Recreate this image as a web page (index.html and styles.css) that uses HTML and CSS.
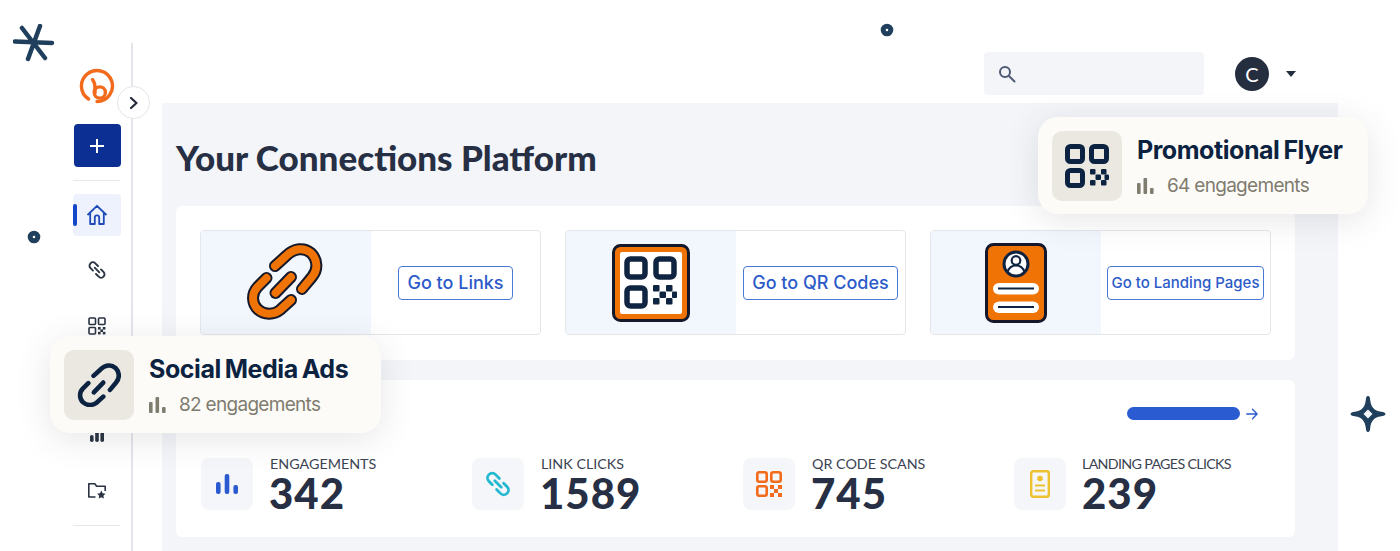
FILE: index.html
```html
<!DOCTYPE html>
<html lang="en">
<head>
<meta charset="utf-8">
<title>Your Connections Platform</title>
<link rel="stylesheet" href="styles.css">
</head>
<body>
<div class="stage">
  <div class="app">
    <aside class="sidebar">
      <div class="logo">
        <svg width="36" height="36" viewBox="0 0 36 36" fill="none" stroke="#f26a1b" stroke-width="3.4" stroke-linecap="round"><path d="M9.5 31A15.500 15.500 0 1 1 18 33.500"/><path d="M13.500 11.500C15.500 14 16 17 16 20v5"/><circle cx="20.800" cy="24.500" r="5.600"/></svg>
      </div>
      <button class="create">
        <svg width="16" height="16" viewBox="0 0 16 16" stroke="#fff" stroke-width="2"><path d="M8 1v14M1 8h14"/></svg>
      </button>
      <hr class="rule">
      <nav class="nav">
        <a class="nav-item active">
          <svg width="22" height="22" viewBox="0 0 22 22" fill="none" stroke="#1f4bb8" stroke-width="1.8" stroke-linejoin="round"><path d="M1.500 11 11 1.800 20.500 11M4.200 9v11h4.600v-6.500a2.200 2.200 0 0 1 4.400 0V20h4.600V9"/></svg>
        </a>
        <a class="nav-item">
          <svg width="20" height="20" viewBox="0 0 20 20" fill="none" stroke="#2a3342" stroke-width="1.900" stroke-linecap="round"><path d="M11 6 8.300 3.300a3.400 3.400 0 0 0-4.800 0 3.400 3.400 0 0 0 0 4.800L6 10.600"/><path d="M9 14l2.700 2.700a3.400 3.400 0 0 0 4.800 0 3.400 3.400 0 0 0 0-4.800L14 9.400"/><path d="m7.700 7.700 4.600 4.600"/></svg>
        </a>
        <a class="nav-item">
          <svg width="18" height="18" viewBox="0 0 18 18"><g fill="none" stroke="#2a3342" stroke-width="1.600"><rect x="1" y="1" width="6.500" height="6.500" rx="1"/><rect x="10.500" y="1" width="6.500" height="6.500" rx="1"/><rect x="1" y="10.500" width="6.500" height="6.500" rx="1"/></g><g fill="#2a3342"><rect x="10" y="10" width="2.600" height="2.600"/><rect x="14.800" y="10" width="2.600" height="2.600"/><rect x="12.400" y="12.400" width="2.600" height="2.600"/><rect x="10" y="14.800" width="2.600" height="2.600"/><rect x="14.800" y="14.800" width="2.600" height="2.600"/></g></svg>
        </a>
        <a class="nav-item">
          <svg width="18" height="18" viewBox="0 0 18 18" fill="#2a3342"><rect x="1" y="1" width="16" height="16" rx="2"/></svg>
        </a>
        <a class="nav-item">
          <svg width="16" height="12" viewBox="0 0 16 12" fill="#2a3342"><rect x="1" y="5" width="3.600" height="7" rx="1.800"/><rect x="6.200" y="1.500" width="3.600" height="10.500" rx="1.800"/><rect x="11.400" y="0" width="3.600" height="12" rx="1.800"/></svg>
        </a>
        <a class="nav-item">
          <svg width="20" height="18" viewBox="0 0 20 18" fill="none" stroke="#2a3342" stroke-width="1.600" stroke-linejoin="round"><path d="M8.500 15H1.800V1.800h6l1.800 2.400h8.600V9"/><path fill="#2a3342" stroke="none" d="m14.300 8.600 1.300 2.700 2.900.4-2.100 2 .5 2.900-2.600-1.400-2.600 1.400.5-2.900-2.100-2 2.900-.4z"/></svg>
        </a>
      </nav>
      <hr class="rule">
    </aside>
    <main class="main">
      <header class="topbar">
        <div class="search">
          <svg width="18" height="18" viewBox="0 0 18 18" fill="none" stroke="#4f5a75" stroke-width="2" stroke-linecap="round"><circle cx="7" cy="7" r="5"/><path d="m11 11 5.500 5.500"/></svg>
        </div>
        <div class="avatar">C</div>
        <span class="caret"></span>
      </header>
      <section class="panel">
        <h1 class="title">Your Connections Platform</h1>
        <div class="box shortcuts">
          <div class="shortcut">
            <div class="art">
              <svg width="84" height="84" viewBox="2 -1 84 84" fill="none" stroke-linecap="round" stroke-linejoin="round">
                <g stroke="#14182a" stroke-width="12"><path d="M24.500 36 15.500 45C9 52 10 62 16 67.500 22 73 32 73 38 68L49 58"/><path d="M33 24 44 14C52 6 62 5 69 11 76 18 76 28 70 35L60 47"/><path d="M33.500 51 49 35"/></g>
                <g stroke="#f07305" stroke-width="8"><path d="M24.500 36 15.500 45C9 52 10 62 16 67.500 22 73 32 73 38 68L49 58"/><path d="M33 24 44 14C52 6 62 5 69 11 76 18 76 28 70 35L60 47"/><path d="M33.500 51 49 35"/></g>
              </svg>
            </div>
            <div class="action"><a class="go">Go to Links</a></div>
          </div>
          <div class="shortcut">
            <div class="art">
              <svg width="78" height="78" viewBox="0 0 78 78">
                <rect x="1.500" y="1.500" width="75" height="75" rx="7" fill="#f07305" stroke="#14182a" stroke-width="3"/>
                <rect x="8" y="8" width="62" height="62" rx="2" fill="#fff"/>
                <g fill="none" stroke="#0f2440" stroke-width="5.500"><rect x="15" y="15" width="18" height="18" rx="3.500"/><rect x="44" y="15" width="18" height="18" rx="3.500"/><rect x="15" y="44" width="18" height="18" rx="3.500"/></g>
                <g fill="#0f2440"><rect x="41" y="41" width="6.500" height="6.500" rx="1"/><rect x="54" y="41" width="6.500" height="6.500" rx="1"/><rect x="47.500" y="47.500" width="6.500" height="6.500" rx="1"/><rect x="60" y="47.500" width="5" height="6.500" rx="1"/><rect x="41" y="54" width="6.500" height="6.500" rx="1"/><rect x="54" y="54" width="6.500" height="6.500" rx="1"/></g>
              </svg>
            </div>
            <div class="action"><a class="go">Go to QR Codes</a></div>
          </div>
          <div class="shortcut">
            <div class="art">
              <svg width="62" height="80" viewBox="0 0 62 80">
                <rect x="1.500" y="1.500" width="59" height="77" rx="7" fill="#f07305" stroke="#14182a" stroke-width="3"/>
                <circle cx="31" cy="21" r="12" fill="#fff" stroke="#0f2440" stroke-width="3"/>
                <circle cx="31" cy="17.500" r="4.300" fill="none" stroke="#0f2440" stroke-width="2.200"/>
                <path d="M22.500 29c1.500-4.500 4.500-6.500 8.500-6.500s7 2 8.500 6.500" fill="none" stroke="#0f2440" stroke-width="2.200"/>
                <rect x="8" y="40" width="46" height="11.500" rx="5.750" fill="#fff"/>
                <rect x="8" y="58.500" width="46" height="11.500" rx="5.750" fill="#fff"/>
                <path d="M13 45.500h36M13 64h36" stroke="#0f2440" stroke-width="2"/>
              </svg>
            </div>
            <div class="action"><a class="go small">Go to Landing Pages</a></div>
          </div>
        </div>
        <div class="box metrics">
          <div class="metrics-head"><span class="redacted"></span>
            <svg width="12" height="12" viewBox="0 0 12 12" fill="none" stroke="#2a5bd0" stroke-width="1.300" stroke-linecap="round" stroke-linejoin="round"><path d="M.7 6h10.400M6.500 1.200 11.100 6l-4.600 4.800"/></svg>
          </div>
          <div class="stats">
            <div class="stat">
              <div class="stat-icon"><svg width="22" height="20" viewBox="0 0 22 20" fill="#2a5bd0"><rect x="0" y="8" width="4.600" height="12" rx="2"/><rect x="8.700" y="0" width="4.600" height="20" rx="2"/><rect x="17.400" y="11" width="4.600" height="9" rx="2"/></svg></div>
              <div><div class="stat-label">ENGAGEMENTS</div><div class="stat-value">342</div></div>
            </div>
            <div class="stat">
              <div class="stat-icon"><svg width="28" height="28" viewBox="0 0 20 20" fill="none" stroke="#22b8cf" stroke-width="2" stroke-linecap="round"><path d="M11 6 8.300 3.300a3.400 3.400 0 0 0-4.800 0 3.400 3.400 0 0 0 0 4.800L6 10.600"/><path d="M9 14l2.700 2.700a3.400 3.400 0 0 0 4.800 0 3.400 3.400 0 0 0 0-4.800L14 9.400"/><path d="m7.700 7.700 4.600 4.600"/></svg></div>
              <div><div class="stat-label">LINK CLICKS</div><div class="stat-value">1589</div></div>
            </div>
            <div class="stat">
              <div class="stat-icon"><svg width="26" height="26" viewBox="0 0 26 26"><g fill="none" stroke="#f26a1b" stroke-width="2.600"><rect x="1.300" y="1.300" width="9.400" height="9.400" rx="2"/><rect x="15.300" y="1.300" width="9.400" height="9.400" rx="2"/><rect x="1.300" y="15.300" width="9.400" height="9.400" rx="2"/></g><g fill="#f26a1b"><rect x="14" y="14" width="4" height="4"/><rect x="22" y="14" width="4" height="4"/><rect x="18" y="18" width="4" height="4"/><rect x="14" y="22" width="4" height="4"/><rect x="22" y="22" width="4" height="4"/></g></svg></div>
              <div><div class="stat-label">QR CODE SCANS</div><div class="stat-value">745</div></div>
            </div>
            <div class="stat">
              <div class="stat-icon"><svg width="20" height="28" viewBox="0 0 20 28" fill="none" stroke="#eec12e" stroke-width="2.400"><rect x="1.200" y="1.200" width="17.600" height="25.600" rx="2"/><circle cx="10" cy="8.500" r="2.800" fill="#eec12e" stroke="none"/><path stroke-width="2" d="M5 15.500h10M5 20.500h10"/></svg></div>
              <div><div class="stat-label tight">LANDING PAGES CLICKS</div><div class="stat-value">239</div></div>
            </div>
          </div>
        </div>
      </section>
    </main>
  </div>

  <button class="toggle" aria-label="Expand">
    <svg width="10" height="14" viewBox="0 0 10 14" fill="none" stroke="#23293a" stroke-width="2.200" stroke-linecap="round" stroke-linejoin="round"><path d="m2 2 5.500 5L2 12"/></svg>
  </button>

  <div class="float float-flyer">
    <div class="float-icon">
      <svg width="44" height="44" viewBox="0 0 44 44"><g fill="none" stroke="#0b2341" stroke-width="5"><rect x="2.500" y="2.500" width="15" height="15" rx="3"/><rect x="26.500" y="2.500" width="15" height="15" rx="3"/><rect x="2.500" y="26.500" width="15" height="15" rx="3"/></g><g fill="#0b2341"><rect x="25" y="25" width="5.500" height="5.500" rx="1"/><rect x="36" y="25" width="5.500" height="5.500" rx="1"/><rect x="30.500" y="30.500" width="5.500" height="5.500" rx="1"/><rect x="39.500" y="30.500" width="4.500" height="5.500" rx="1"/><rect x="25" y="36" width="5.500" height="5.500" rx="1"/><rect x="36" y="36" width="5.500" height="5.500" rx="1"/></g></svg>
    </div>
    <div class="float-body">
      <div class="float-title">Promotional Flyer</div>
      <div class="float-sub">
        <svg class="float-bars" width="17" height="16" viewBox="0 0 17 16" fill="#7f7c70"><rect x="0" y="5" width="3.600" height="11" rx="1"/><rect x="6.500" y="0" width="3.600" height="16" rx="1"/><rect x="13" y="10" width="3.600" height="6" rx="1"/></svg>
        <span>64 engagements</span>
      </div>
    </div>
  </div>

  <div class="float float-social">
    <div class="float-icon">
      <svg width="44" height="44" viewBox="6 3 72 72" fill="none" stroke="#0b2341" stroke-width="7.500" stroke-linecap="round"><path d="M24.500 36 15.500 45C9 52 10 62 16 67.500 22 73 32 73 38 68L49 58"/><path d="M33 24 44 14C52 6 62 5 69 11 76 18 76 28 70 35L60 47"/><path d="M33.500 51 49 35"/></svg>
    </div>
    <div class="float-body">
      <div class="float-title">Social Media Ads</div>
      <div class="float-sub">
        <svg class="float-bars" width="17" height="16" viewBox="0 0 17 16" fill="#7f7c70"><rect x="0" y="5" width="3.600" height="11" rx="1"/><rect x="6.500" y="0" width="3.600" height="16" rx="1"/><rect x="13" y="10" width="3.600" height="6" rx="1"/></svg>
        <span>82 engagements</span>
      </div>
    </div>
  </div>

  <svg class="deco deco-asterisk" width="44" height="38" viewBox="0 0 44 38" fill="none" stroke="#1f3f5c" stroke-width="4.500" stroke-linecap="round"><path d="M2 17.500 39 19M9 4 32 34M27 2 15 35"/></svg>
  <svg class="deco deco-dot-a" width="14" height="14" viewBox="0 0 14 14"><circle cx="7" cy="7" r="3.800" fill="none" stroke="#1f3f5c" stroke-width="5"/></svg>
  <svg class="deco deco-dot-b" width="14" height="14" viewBox="0 0 14 14"><circle cx="7" cy="7" r="3.800" fill="none" stroke="#1f3f5c" stroke-width="5"/></svg>
  <svg class="deco deco-star" width="36" height="36" viewBox="0 0 36 36" fill="#1f3f5c"><path d="M18 0c1.500 0 2 1.500 2.200 4 .6 6.500 3.800 11 11 11.800 2.500.3 4.300 1 4.300 2.200s-1.800 1.900-4.300 2.200c-7.200.8-10.400 5.300-11 11.800-.2 2.500-.7 4-2.200 4s-2-1.500-2.200-4c-.6-6.500-3.800-11-11-11.800C2.300 19.900.5 19.200.5 18s1.800-1.900 4.300-2.200c7.200-.8 10.400-5.300 11-11.800C16 1.500 16.500 0 18 0z"/><path fill="#f4f6f9" d="m18 13.500 4.500 4.500-4.500 4.500-4.500-4.500z"/></svg>
</div>
</body>
</html>
```
FILE: styles.css
```css
* { box-sizing: border-box; }
html, body { margin: 0; padding: 0; background: #fff; }
body { font-family: "Lato", "Liberation Sans", sans-serif; color: #262f43; }
.stage { position: relative; width: 1400px; height: 551px; overflow: hidden; background: #fff; }

.app { display: flex; height: 551px; padding: 43px 0 0 61px; }

/* sidebar */
.sidebar { width: 72px; flex: none; height: 508px; border-right: 2px solid #e3e5ea; padding: 27px 11px 0 12px; display: flex; flex-direction: column; align-items: center; }
.logo { height: 36px; margin-bottom: 20px; margin-top: -2px; }
.logo svg { display: block; }
.create { width: 47px; height: 43px; margin-left: 1px; border: 0; border-radius: 4px; background: #0b2f93; display: flex; align-items: center; justify-content: center; padding: 0; flex: none; }
.rule { width: 47px; height: 1px; margin: 13px 0; border: 0; background: #e6e7eb; flex: none; }
.nav { display: flex; flex-direction: column; gap: 13.300px; width: 48px; }
.nav-item { height: 42px; display: flex; align-items: center; justify-content: center; position: relative; border-radius: 4px; }
.nav-item.active { background: #edf2fc; }
.nav-item.active::before { content: ""; position: absolute; left: 0; top: 10px; width: 4px; height: 22px; border-radius: 2px; background: #1446c8; }

/* main */
.main { margin-left: 29px; width: 1176px; flex: none; }
.topbar { height: 60px; display: flex; align-items: flex-start; padding: 9px 0 0 822px; }
.search { width: 220px; height: 43px; border-radius: 4px; background: #f3f5f9; display: flex; align-items: center; padding-left: 14px; }
.avatar { width: 34px; height: 34px; margin: 5px 0 0 31px; border-radius: 50%; background: #252e3f; color: #fff; font-size: 20px; display: flex; align-items: center; justify-content: center; }
.caret { width: 0; height: 0; margin: 19px 0 0 17px; border: 5px solid transparent; border-top: 6px solid #252e3f; border-bottom: 0; }

.panel { height: 448px; background: #f3f5f9; padding: 0 43px 0 14px; }
.title { margin: 0; height: 103px; padding-top: 4px; display: flex; align-items: center; font-family: "Lato", sans-serif; font-weight: 900; font-size: 35px; color: #262f43; }
.box { background: #fff; border-radius: 6px; }

.shortcuts { height: 154px; padding: 24px 25px 25px 24px; display: grid; grid-template-columns: repeat(3, 341px); column-gap: 24px; }
.shortcut { height: 105px; border: 1px solid #e4e6ea; border-radius: 4px; display: grid; grid-template-columns: 170px 1fr; overflow: hidden; }
.art { background: #f2f7fd; display: flex; align-items: center; justify-content: center; }
.action { display: flex; align-items: center; justify-content: center; }
.go { display: flex; align-items: center; height: 34px; padding: 0 8px; border: 1.500px solid #4a78d6; border-radius: 4px; color: #2c5bc9; font-family: "Inter", sans-serif; font-weight: 500; font-size: 18px; white-space: nowrap; }
.go.small { font-size: 15px; padding: 0 4px; }

.metrics { margin-top: 20px; height: 157px; padding: 27px 37px 0 25px; }
.metrics-head { height: 13px; display: flex; justify-content: flex-end; align-items: center; gap: 6px; }
.redacted { width: 113px; height: 13px; border-radius: 7px; background: #2a5bd0; }
.stats { margin-top: 38px; display: grid; grid-template-columns: repeat(4, 271px); }
.stat { display: flex; gap: 17px; }
.stat-icon { width: 52px; height: 52px; flex: none; border-radius: 8px; background: #f4f6f9; display: flex; align-items: center; justify-content: center; }
.stat-label { font-size: 14.300px; line-height: 14px; margin-top: -1px; color: #3c4352; white-space: nowrap; }
.stat-label.tight { letter-spacing: -.7px; margin-left: -1px; }
.stat-value { font-weight: 900; font-size: 42px; line-height: 44px; letter-spacing: 1px; margin-left: -1px; color: #262f43; }

/* overlays */
.toggle { position: absolute; left: 117px; top: 86px; width: 33px; height: 33px; padding: 0; border-radius: 50%; background: #fff; border: 1px solid #e3e5ea; display: flex; align-items: center; justify-content: center; }

.float { position: absolute; display: flex; align-items: center; gap: 14px; height: 97px; padding: 0 14px; border-radius: 20px; background: #fdfbf7; box-shadow: 0 6px 34px rgba(60, 60, 70, .13); }
.float-flyer { left: 1038px; top: 117px; width: 330px; }
.float-social { left: 50px; top: 336px; width: 331px; }
.float-icon { width: 70px; height: 70px; flex: none; border-radius: 10px; background: #ebe8e2; display: flex; align-items: center; justify-content: center; }
.float-body { padding-top: 2px; margin-left: 1px; }
.float-title { font-family: "Inter", sans-serif; font-weight: 700; font-size: 25px; line-height: 30px; letter-spacing: -.45px; word-spacing: -1.500px; color: #0b2341; white-space: nowrap; }
.float-sub { display: flex; align-items: center; gap: 13px; margin-top: 9px; font-family: "Inter", sans-serif; font-size: 19px; line-height: 24px; letter-spacing: -.7px; color: #7f7c70; white-space: nowrap; }

.deco { position: absolute; display: block; }
.deco-asterisk { left: 13px; top: 24px; }
.deco-dot-a { left: 27px; top: 230px; }
.deco-dot-b { left: 880px; top: 23px; }
.deco-star { left: 1350px; top: 396px; }
```
